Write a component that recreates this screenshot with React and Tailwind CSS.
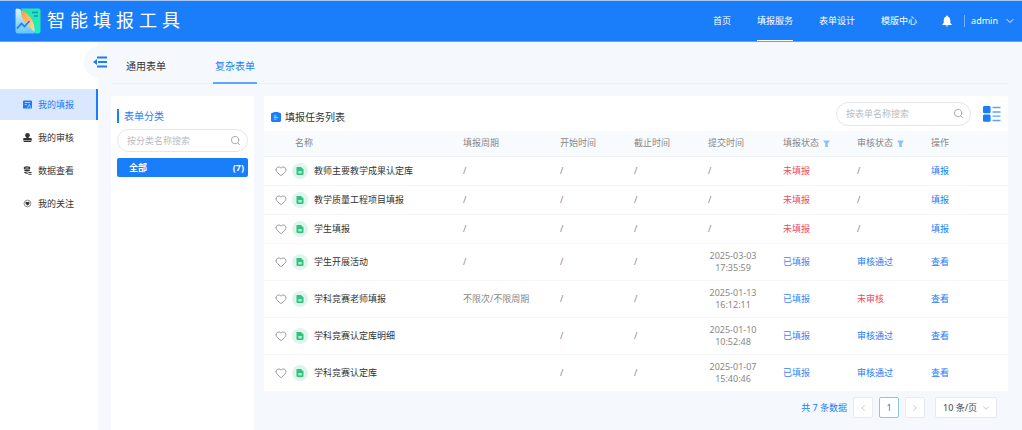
import { useState } from 'react';
import { ChevronDown, ChevronLeft, ChevronRight, Heart, Search } from 'lucide-react';

const navItems = ['首页', '填报服务', '表单设计', '模版中心'];

const tasks = [
  { name: '教师主要教学成果认定库', cycle: '/', submit: null, filled: false, audit: null },
  { name: '教学质量工程项目填报', cycle: '/', submit: null, filled: false, audit: null },
  { name: '学生填报', cycle: '/', submit: null, filled: false, audit: null },
  { name: '学生开展活动', cycle: '/', submit: ['2025-03-03', '17:35:59'], filled: true, audit: '审核通过' },
  { name: '学科竞赛老师填报', cycle: '不限次/不限周期', submit: ['2025-01-13', '16:12:11'], filled: true, audit: '未审核' },
  { name: '学科竞赛认定库明细', cycle: '', submit: ['2025-01-10', '10:52:48'], filled: true, audit: '审核通过' },
  { name: '学科竞赛认定库', cycle: '', submit: ['2025-01-07', '15:40:46'], filled: true, audit: '审核通过' },
];

function Logo() {
  return (
    <svg viewBox="0 0 26 26" className="size-[26px]" aria-hidden="true">
      <defs>
        <linearGradient id="logoGreen" x1="0" y1="0" x2="1" y2="1">
          <stop offset="0" stopColor="#2fe39a" />
          <stop offset="1" stopColor="#19f0c4" />
        </linearGradient>
        <linearGradient id="logoBlue" x1="0" y1="0" x2="0" y2="1">
          <stop offset="0" stopColor="#d8f1ff" />
          <stop offset="1" stopColor="#63c6f8" />
        </linearGradient>
        <linearGradient id="logoOrange" x1="0" y1="0" x2="1" y2="1">
          <stop offset="0" stopColor="#ff9a3c" />
          <stop offset="1" stopColor="#ffdf9e" />
        </linearGradient>
      </defs>
      <path d="M6 0.5H23.5Q25.5 0.5 25.5 2.5V23.5Q25.5 25.5 23.5 25.5H20Z" fill="url(#logoGreen)" />
      <path d="M2 0.5Q0.5 0.5 0.5 2V23Q0.5 25.5 3 25.5H18Q20 25.5 20 23Q16 20 11 14Q7 9 6 2Q5 0.5 2 0.5Z" fill="url(#logoBlue)" />
      <path d="M6 2.5Q10 3 15 9Q20 15 19.500 24Q17 21 12 17Q6 11 6 2.5Z" fill="url(#logoOrange)" />
      <path d="M17 4.5H23M19 8H23" stroke="#1691c8" strokeWidth="1.3" />
      <path d="M2 20.5L6.5 15.5L9.5 18.5L14.5 13" fill="none" stroke="#1b7cf0" strokeWidth="1.6" />
    </svg>
  );
}

function FillIcon() {
  return (
    <svg viewBox="0 0 10 10" className="size-[9px]" aria-hidden="true">
      <rect x="0" y="0.5" width="10" height="9" rx="1" fill="currentColor" />
      <path d="M2 2.8H8M2 5H4.5M5 8.5L7.2 5L8.5 8.5" stroke="#d9e7ff" strokeWidth="0.8" fill="none" />
    </svg>
  );
}

function StampIcon() {
  return (
    <svg viewBox="0 0 10 10" className="size-[9px]" fill="currentColor" aria-hidden="true">
      <circle cx="5" cy="2.6" r="2.6" />
      <path d="M3.8 4H6.2V5.5H8.5Q9.8 5.5 9.8 6.5V8.2H0.2V6.5Q0.2 5.5 1.5 5.5H3.8ZM0.8 8.8H9.2V9.9H0.8Z" />
    </svg>
  );
}

function DataIcon() {
  return (
    <svg viewBox="0 0 10 10" className="size-[9px]" fill="none" stroke="currentColor" aria-hidden="true">
      <ellipse cx="4.5" cy="2.2" rx="3" ry="1.2" strokeWidth="1.4" />
      <path d="M1.5 4.6Q4.5 6 7.5 4.6M1.5 7Q3 8 5.200 8" strokeWidth="1.5" />
      <path d="M6 7.2H9.5M6 9.2H9.5" strokeWidth="1.1" />
    </svg>
  );
}

function FollowIcon() {
  return (
    <svg viewBox="0 0 10 10" className="size-[9px]" aria-hidden="true">
      <circle cx="5" cy="5" r="3.8" fill="none" stroke="currentColor" strokeWidth="0.6" />
      <path d="M5 7.4L2.7 5Q2.400 3.2 3.900 3.1Q4.700 3.1 5 3.7Q5.300 3.1 6.100 3.1Q7.600 3.2 7.300 5Z" fill="currentColor" />
    </svg>
  );
}

function CollapseIcon() {
  return (
    <svg viewBox="0 0 14 12" className="h-3 w-3.5" aria-hidden="true">
      <path d="M4 1.5H14M5 6H14M4 10.5H14" stroke="#1a7dfa" strokeWidth="1.8" />
      <path d="M0 6L4 3V9Z" fill="#1a7dfa" />
    </svg>
  );
}

function BellIcon() {
  return (
    <svg viewBox="0 0 10 12" className="h-3 w-2.5" fill="currentColor" aria-hidden="true">
      <path d="M5 0.5Q5.8 0.5 5.9 1.5Q8.3 2.3 8.3 5.3V8L9.8 9.5V10H0.2V9.5L1.7 8V5.3Q1.7 2.3 4.1 1.5Q4.2 0.5 5 0.5ZM3.7 10.4H6.3Q6.3 11.5 5 11.5Q3.7 11.5 3.7 10.4Z" />
    </svg>
  );
}

function ListIcon() {
  return (
    <svg viewBox="0 0 10 10" className="size-2.5" aria-hidden="true">
      <rect x="0" y="0.8" width="10" height="9.2" rx="1.4" fill="#1a7dfa" />
      <rect x="2.5" y="0" width="5" height="2" rx="0.5" fill="#1a7dfa" />
      <path d="M2.8 3.8H5.5M2.8 5.5H7.2M2.8 7.2H5.5" stroke="#b5d5ff" strokeWidth="0.9" />
    </svg>
  );
}

function SheetIcon() {
  return (
    <span className="grid size-4 place-items-center rounded-full bg-[#dff5eb]">
      <svg viewBox="0 0 8 8" className="size-2" aria-hidden="true">
        <path d="M1 0H5L7.5 2.5V7Q7.5 8 6.5 8H1.5Q0.5 8 0.5 7V0.5Z" fill="#2fc281" />
        <path d="M2.3 4H5.8V6.4H2.3Z" fill="#b5ead1" />
      </svg>
    </span>
  );
}

function FilterIcon() {
  return (
    <svg viewBox="0 0 8 8" className="size-[7px]" aria-hidden="true">
      <path d="M0 0.5H8L5.5 4V8H2.5V4Z" fill="#8cc0ff" />
    </svg>
  );
}

function ViewIcon() {
  return (
    <svg viewBox="0 0 18 16" className="h-4 w-[18px]" aria-hidden="true">
      <rect x="0" y="0" width="7.6" height="7.3" rx="1.4" fill="#1a7dfa" />
      <rect x="0" y="8.5" width="7.6" height="7.3" rx="1.4" fill="#1a7dfa" />
      <path d="M9.5 1.5H17.5M9.500 6H17.5M9.5 10.2H17.5M9.5 14.5H17.5" stroke="#5ca2fc" strokeWidth="1.3" />
    </svg>
  );
}

const menuItems = [
  { label: '我的填报', Icon: FillIcon },
  { label: '我的审核', Icon: StampIcon },
  { label: '数据查看', Icon: DataIcon },
  { label: '我的关注', Icon: FollowIcon },
];

function SearchBox({ label, className }) {
  return (
    <label className={`flex items-center rounded-full border border-[#e4e6ea] bg-white pr-1.5 pl-[9px] ${className}`}>
      <input
        type="text"
        aria-label={label}
        placeholder={label}
        className="min-w-0 flex-1 outline-none placeholder:text-[#b9bcc2]"
      />
      <Search className="size-[11px] shrink-0 text-[#a0a4aa]" strokeWidth={2} />
    </label>
  );
}

function TaskRow({ task }) {
  return (
    <tr className={`border-b border-[#f5f6f8] last:border-0 ${task.submit ? 'h-[37px]' : 'h-[29px]'}`}>
      <td className="pl-[11px]">
        <div className="flex items-center">
          <button type="button" aria-label="关注">
            <Heart className="size-3 text-[#999]" strokeWidth={2} />
          </button>
          <span className="ml-[5px]">
            <SheetIcon />
          </span>
          <span className="ml-1.5 text-[#333]">{task.name}</span>
        </div>
      </td>
      <td className="pl-2">{task.cycle}</td>
      <td className="pl-2">/</td>
      <td className="pl-2">/</td>
      <td className="pl-2">
        {task.submit ? (
          <div className="w-[50px] text-center">
            {task.submit[0]}
            <br />
            {task.submit[1]}
          </div>
        ) : (
          '/'
        )}
      </td>
      <td className={`pl-2 ${task.filled ? 'text-[#3d86f5]' : 'text-[#ee4b66]'}`}>{task.filled ? '已填报' : '未填报'}</td>
      <td className={`pl-2 ${task.audit === '审核通过' ? 'text-[#1a7dfa]' : task.audit ? 'text-[#ee4b66]' : ''}`}>
        {task.audit || '/'}
      </td>
      <td className="pl-2">
        <a href="#" className="text-[#1a7dfa]">{task.filled ? '查看' : '填报'}</a>
      </td>
    </tr>
  );
}

export default function App() {
  const [menu, setMenu] = useState('我的填报');
  const [tab, setTab] = useState('复杂表单');

  return (
    <div className="flex min-h-screen flex-col bg-[#f5f9fd] font-['Noto_Sans','Noto_Sans_CJK_SC',sans-serif] text-[9px] leading-3 text-[#888]">
      <header className="flex h-[42px] items-center border-y border-t-[#a9c9f2] border-b-[#5ea4fb] bg-[#1a7dfa] pr-1.5 pl-[15px] text-white">
        <Logo />
        <h1 className="ml-1.5 pb-0.5 text-[18px] leading-6 tracking-[5px]">智能填报工具</h1>
        <nav className="ml-auto flex h-full gap-[26px]">
          {navItems.map((item) => (
            <a
              key={item}
              href="#"
              className={`flex items-center border-b ${item === '填报服务' ? 'border-white' : 'border-transparent'}`}
            >
              {item}
            </a>
          ))}
        </nav>
        <button type="button" aria-label="通知" className="ml-[25px]">
          <BellIcon />
        </button>
        <span className="ml-3 h-3 w-px bg-[#6fb0ff]" />
        <button type="button" className="ml-1.5 flex items-center gap-1.5">
          admin
          <ChevronDown className="size-3" strokeWidth={2} />
        </button>
      </header>

      <div className="flex flex-1">
        <aside className="relative w-[98px] shrink-0 bg-white pt-[47px]">
          <button
            type="button"
            aria-label="收起菜单"
            className="absolute top-1 -right-[18px] grid size-8 place-items-center rounded-full bg-[#f5f9fd]"
          >
            <CollapseIcon />
          </button>
          <ul className="flex flex-col gap-0.5">
            {menuItems.map(({ label, Icon }) => (
              <li key={label}>
                <button
                  type="button"
                  onClick={() => setMenu(label)}
                  className={`flex h-[31px] w-full items-center gap-1.5 border-r-2 pl-[23px] ${
                    menu === label ? 'border-[#1a7dfa] bg-[#d9e7ff] text-[#1a7dfa]' : 'border-transparent text-[#333]'
                  }`}
                >
                  <Icon />
                  {label}
                </button>
              </li>
            ))}
          </ul>
        </aside>

        <main className="flex min-w-0 flex-1 flex-col pr-3.5 pl-[13px]">
          <div className="flex h-[42px] gap-[45px] border-b border-[#eceff3] pl-[13px] text-[10px]">
            {['通用表单', '复杂表单'].map((name) => (
              <button
                key={name}
                type="button"
                onClick={() => setTab(name)}
                className={`-mb-px border-b-2 px-0.5 pt-2 ${
                  tab === name ? 'border-[#5fa5fb] text-[#1a7dfa]' : 'border-transparent text-[#333]'
                }`}
              >
                {name}
              </button>
            ))}
          </div>

          <div className="mt-3 flex flex-1 gap-2.5">
            <section className="w-[143px] shrink-0 bg-white px-1.5 pt-[13px]">
              <h2 className="border-l-2 border-[#1a7dfa] pl-[5px] text-[10px] leading-[14px] text-[#1a7dfa]">表单分类</h2>
              <SearchBox label="按分类名称搜索" className="mt-1.5 h-[23px]" />
              <button
                type="button"
                className="mt-1.5 flex h-[19px] w-full items-center justify-between rounded-xs bg-[#1a7dfa] pr-1 pl-3 font-bold text-white"
              >
                <span>全部</span>
                <span>(7)</span>
              </button>
            </section>

            <section className="min-w-0 flex-1">
              <div className="bg-white">
                <div className="flex h-[35px] items-center pr-[7px] pl-[7px]">
                  <div className="flex items-center gap-1 pt-1.5">
                    <ListIcon />
                    <h2 className="text-[10px] text-[#333]">填报任务列表</h2>
                  </div>
                  <SearchBox label="按表单名称搜索" className="ml-auto h-6 w-[135px]" />
                  <button type="button" aria-label="切换视图" className="ml-3">
                    <ViewIcon />
                  </button>
                </div>
                <table className="w-full table-fixed text-left">
                  <thead>
                    <tr className="h-[25px] border-b border-[#eef1f5] bg-[#f8fbfe]">
                      <th className="pl-[31px] font-normal">名称</th>
                      <th className="w-[97px] pl-2 font-normal">填报周期</th>
                      <th className="w-[74px] pl-2 font-normal">开始时间</th>
                      <th className="w-[74px] pl-2 font-normal">截止时间</th>
                      <th className="w-[75px] pl-2 font-normal">提交时间</th>
                      <th className="w-[74px] pl-2 font-normal">
                        <span className="flex items-center gap-1">填报状态<FilterIcon /></span>
                      </th>
                      <th className="w-[74px] pl-2 font-normal">
                        <span className="flex items-center gap-1">审核状态<FilterIcon /></span>
                      </th>
                      <th className="w-[85px] pl-2 font-normal">操作</th>
                    </tr>
                  </thead>
                  <tbody>
                    {tasks.map((task) => (
                      <TaskRow key={task.name} task={task} />
                    ))}
                  </tbody>
                </table>
              </div>

              <div className="mt-1.5 flex items-center justify-end gap-1.5 pr-[11px]">
                <span className="text-[#1a7dfa]">共 7 条数据</span>
                <button
                  type="button"
                  aria-label="上一页"
                  className="grid h-[21px] w-5 place-items-center rounded-xs border border-[#e8eaee] bg-white text-[#bbb]"
                >
                  <ChevronLeft className="size-2.5" />
                </button>
                <button
                  type="button"
                  className="grid h-[21px] w-5 place-items-center rounded-xs border border-[#8fc1ff] bg-white text-[#1a7dfa]"
                >
                  1
                </button>
                <button
                  type="button"
                  aria-label="下一页"
                  className="grid h-[21px] w-5 place-items-center rounded-xs border border-[#e8eaee] bg-white text-[#bbb]"
                >
                  <ChevronRight className="size-2.5" />
                </button>
                <div className="relative ml-1 flex items-center">
                  <select
                    aria-label="每页条数"
                    className="h-[21px] w-[62px] appearance-none rounded-xs border border-[#e8eaee] bg-white pl-[7px] text-[#444]"
                  >
                    <option>10 条/页</option>
                    <option>20 条/页</option>
                    <option>50 条/页</option>
                  </select>
                  <ChevronDown className="pointer-events-none absolute right-1.5 size-2.5 text-[#bbb]" />
                </div>
              </div>
            </section>
          </div>
        </main>
      </div>
    </div>
  );
}
